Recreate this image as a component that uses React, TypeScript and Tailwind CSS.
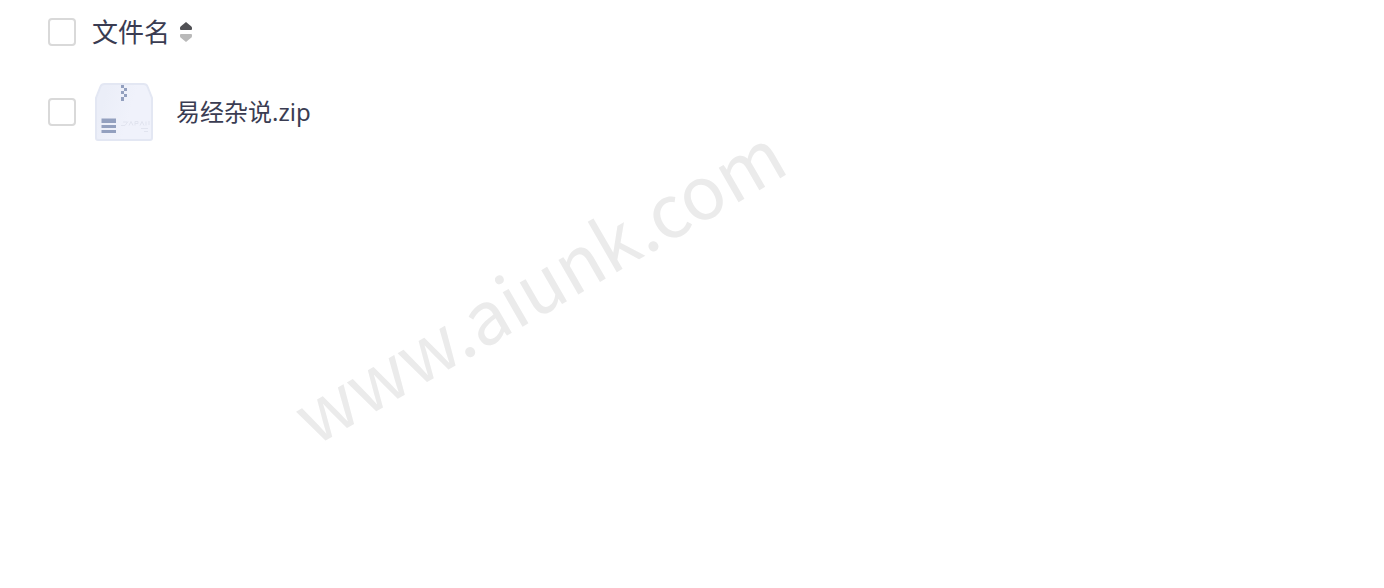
type FileItem = {
    id: number;
    name: string;
}

const files: FileItem[] = [
    { id: 1, name: "易经杂说.zip" },
]

function Checkbox ({ label }: { label: string }) {
    return (
        <input
        type="checkbox"
        aria-label={label}
        className="block size-7 appearance-none rounded-sm border-2 border-[#d9d9d9] bg-white checked:border-blue-500 checked:bg-blue-500"
        />
    )
}

function SortIcon () {
    return (
        <svg width="14" height="22" viewBox="0 0 14 22" aria-hidden="true">
            <path d="M7 1 L12.4 5.6 Q13 6.2 13 7 V8 Q13 9 12 9 H2 Q1 9 1 8 V7 Q1 6.2 1.6 5.6 Z" fill="#505054" />
            <path d="M7 21 L12.4 16.4 Q13 15.8 13 15 V14 Q13 13 12 13 H2 Q1 13 1 14 V15 Q1 15.8 1.6 16.4 Z" fill="#b9b9b9" />
        </svg>
    )
}

function ZipIcon () {
    return (
        <svg width="64" height="64" viewBox="0 0 64 64" aria-hidden="true">
            <defs>
                <linearGradient id="zip-body" x1="0" y1="0" x2="1" y2="0.3">
                    <stop offset="0.2" stopColor="#ebeef8" />
                    <stop offset="0.7" stopColor="#f0f2fb" />
                </linearGradient>
            </defs>
            <path
            d="M12.5 4 H51.5 Q54.5 4 55.5 6.5 L60 18 V58 Q60 60 58 60 H6 Q4 60 4 58 V18 L8.5 6.5 Q9.5 4 12.5 4 Z"
            fill="url(#zip-body)"
            stroke="#e3e7f3"
            strokeWidth="2"
            />
            <g fill="#93a0bf">
                <rect x="29" y="5" width="3" height="3" />
                <rect x="32" y="8" width="3" height="3" />
                <rect x="29" y="11" width="3" height="3" />
                <rect x="32" y="14" width="3" height="3" />
                <rect x="29" y="17" width="3" height="4" />
                <rect x="9.5" y="38.5" width="14.5" height="4.5" />
                <rect x="9.5" y="45" width="14.5" height="3" />
                <rect x="9.5" y="50" width="14.5" height="3" />
            </g>
            <g stroke="#e1e4ef" fill="none">
                <path d="M29 45.5 h4 l3 -4 M31 42 h4 M37 45.5 l2 -4 l2 4 M43 45.5 v-4 h3 v2 h-3 M48 45.5 l2 -4 l2 4 M54 41.5 v4 M57 41 v4" />
                <path d="M49 48.5 h7 M52 51.5 h4" />
            </g>
        </svg>
    )
}

export default function App () {
    return (
        <main className="relative min-h-screen overflow-hidden bg-white font-['Noto_Sans','Noto_Sans_CJK_SC',sans-serif] text-[#3a3c52]" lang="zh-CN">
            <table className="w-full text-left">
                <thead>
                    <tr className="h-16">
                        <th className="w-23 pl-12">
                            <Checkbox label="全选" />
                        </th>
                        <th className="font-normal" aria-sort="ascending">
                            <button className="flex items-center gap-[9px] text-[26px] leading-8">
                                文件名
                                <SortIcon />
                            </button>
                        </th>
                    </tr>
                </thead>
                <tbody>
                    {files.map((file) => (
                        <tr key={file.id} className="h-24">
                            <td className="w-23 pl-12">
                                <Checkbox label={file.name} />
                            </td>
                            <td>
                                <a href="#" className="flex items-center gap-5 text-2xl">
                                    <ZipIcon />
                                    {file.name}
                                </a>
                            </td>
                        </tr>
                    ))}
                </tbody>
            </table>

            <p className="pointer-events-none absolute left-[537px] top-[282px] -translate-x-1/2 -translate-y-1/2 -rotate-30 whitespace-nowrap font-['Noto_Sans_CJK_SC',sans-serif] text-[73px] leading-none text-[#ebebeb]">
                www.aiunk.com
            </p>
        </main>
    )
}
